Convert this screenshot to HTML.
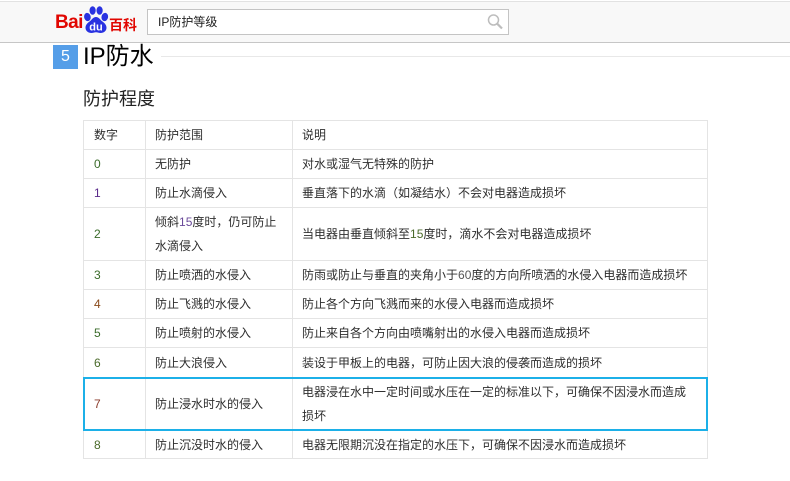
<!DOCTYPE html>
<html lang="zh"><head><meta charset="utf-8"><title>IP防水</title>
<style>
html,body{margin:0;padding:0;background:#fff;width:790px;height:481px;overflow:hidden}
body{position:relative;font-family:"Liberation Sans","WenQuanYi Zen Hei","Noto Sans CJK SC",sans-serif;color:#333}
.a{position:absolute;white-space:nowrap}
#hd{position:absolute;left:0;top:1px;width:790px;background:#f8f8f8;border-top:1px solid #e2e2e2;border-bottom:1px solid #c6c6c6;box-sizing:content-box;height:40px}
#sb{position:absolute;left:147px;top:9px;width:360px;height:24px;background:#fff;border:1px solid #c4c4c4;font-size:12px;line-height:25px;color:#222}
#sb span{position:absolute;left:10px;top:0}
table{position:absolute;left:83px;top:120px;width:624px;border-collapse:collapse;table-layout:fixed;font-size:12px;color:#2e2e2e}
td{border:1px solid #e4e4e4;padding:0 8px 0 9px;line-height:24px;vertical-align:middle;white-space:nowrap}
td:first-child{padding-left:10px}
</style></head><body>
<div id="hd"></div>
<div class="a" style="left:55px;top:13px;font-size:19px;font-weight:bold;color:#e10601;line-height:20px;letter-spacing:-.6px">Bai</div>
<svg class="a" style="left:83px;top:5px" width="26" height="29" viewBox="0 0 26 29">
<g fill="#2932e1">
<ellipse cx="4.400" cy="12" rx="3.300" ry="4.200" transform="rotate(-12 4.400 12)"/>
<ellipse cx="9.600" cy="5.500" rx="3.100" ry="4.300"/>
<ellipse cx="16.600" cy="5.500" rx="3.100" ry="4.300"/>
<ellipse cx="21.800" cy="12" rx="3.300" ry="4.200" transform="rotate(12 21.800 12)"/>
<path d="M13 12c3 0 4 2.800 6.800 4.800 2.700 2 3.700 4 3.700 6 0 3.500-3 5.200-5.800 5.200-2 0-3.200-.7-4.700-.7s-2.700.7-4.700.7C5.500 28 2.500 26.300 2.500 22.800c0-2 1-4 3.700-6S10 12 13 12z"/>
</g>
<text x="13" y="25.500" font-family="Liberation Sans" font-size="11" font-weight="bold" fill="#fff" text-anchor="middle">du</text>
</svg>
<div class="a" style="left:109px;top:17px;font-size:14px;font-weight:bold;color:#e10601;line-height:16px">百科</div>
<div id="sb"><span>IP防护等级</span></div>
<svg class="a" style="left:486px;top:13px" width="18" height="18" viewBox="0 0 18 18" fill="none" stroke="#bdbdbd"><circle cx="7.500" cy="7" r="5" stroke-width="1.500"/><path d="M11.300 10.800L16 15.500" stroke-width="2.200"/></svg>

<div class="a" style="left:53px;top:45px;width:25px;height:24px;background:#559ee8;color:#fff;font-size:16px;line-height:24px;text-align:center">5</div>
<div class="a" style="left:83px;top:42px;font-size:24px;line-height:30px;color:#000">IP防水</div>
<div class="a" style="left:161px;top:56px;width:629px;height:1px;background:#e8e8e8"></div>
<div class="a" style="left:83px;top:88px;font-size:18px;line-height:22px;color:#222">防护程度</div>

<table>
<colgroup><col style="width:62px"><col style="width:147px"><col style="width:415px"></colgroup>
<tr style="height:29px"><td>数字</td><td>防护范围</td><td>说明</td></tr>
<tr style="height:29px"><td style="color:#3a6b2a">0</td><td>无防护</td><td>对水或湿气无特殊的防护</td></tr>
<tr style="height:29px"><td style="color:#5a2a8a">1</td><td>防止水滴侵入</td><td>垂直落下的水滴（如凝结水）不会对电器造成损坏</td></tr>
<tr style="height:53px"><td style="color:#3a6b2a">2</td><td>倾斜<span style="color:#6a4a9a">15</span>度时，仍可防止<br>水滴侵入</td><td>当电器由垂直倾斜至<span style="color:#4a6a2a">15</span>度时，滴水不会对电器造成损坏</td></tr>
<tr style="height:29px"><td style="color:#3a6b2a">3</td><td>防止喷洒的水侵入</td><td>防雨或防止与垂直的夹角小于<span style="color:#555">60</span>度的方向所喷洒的水侵入电器而造成损坏</td></tr>
<tr style="height:29px"><td style="color:#8a4a1a">4</td><td>防止飞溅的水侵入</td><td>防止各个方向飞溅而来的水侵入电器而造成损坏</td></tr>
<tr style="height:29px"><td style="color:#3a6b2a">5</td><td>防止喷射的水侵入</td><td>防止来自各个方向由喷嘴射出的水侵入电器而造成损坏</td></tr>
<tr style="height:30px"><td style="color:#4a6a2a">6</td><td>防止大浪侵入</td><td>装设于甲板上的电器，可防止因大浪的侵袭而造成的损坏</td></tr>
<tr style="height:53px"><td style="color:#8a3a2a">7</td><td>防止浸水时水的侵入</td><td>电器浸在水中一定时间或水压在一定的标准以下，可确保不因浸水而造成<br>损坏</td></tr>
<tr style="height:28px"><td style="color:#4a6a2a">8</td><td>防止沉没时水的侵入</td><td>电器无限期沉没在指定的水压下，可确保不因浸水而造成损坏</td></tr>
</table>
<div class="a" style="left:83px;top:377px;width:621px;height:50px;border:2px solid #1cb0e8"></div>
</body></html>
